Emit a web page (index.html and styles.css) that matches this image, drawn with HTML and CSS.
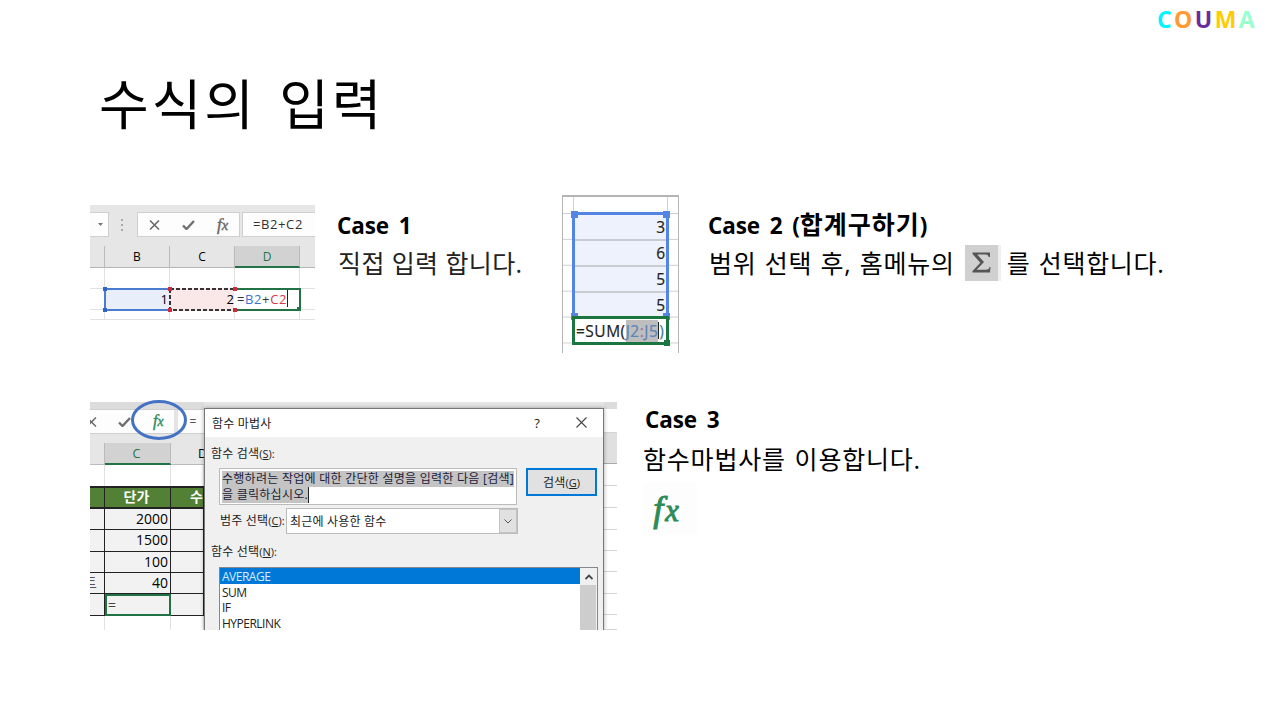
FILE: index.html
```html
<!DOCTYPE html>
<html lang="ko">
<head>
<meta charset="utf-8">
<title>수식의 입력</title>
<link rel="stylesheet" href="styles.css">
</head>
<body>
<main class="slide">
  <header class="brand"><span class="c1">C</span><span class="c2">O</span><span class="c3">U</span><span class="c4">M</span><span class="c5">A</span></header>
  <h1 class="title">수식의 입력</h1>

  <div class="row row-top">
    <section class="sheet-a">
      <div class="bar-a">
        <div class="namebox"><svg width="5" height="3"><path d="M0 0h5L2.500 3z" fill="#777"/></svg></div>
        <svg class="dots" width="3" height="12"><path d="M0 0h2v2H0zM0 5h2v2H0zM0 10h2v2H0z" fill="#aaa"/></svg>
        <div class="tools">
          <svg width="11" height="10" viewBox="0 0 11 10"><path d="M1 .5l9 9M10 .5l-9 9" stroke="#666" stroke-width="1.500"/></svg>
          <svg width="13" height="10" viewBox="0 0 13 10"><path d="M1 5.500L4.500 9 12 1" fill="none" stroke="#707070" stroke-width="2.400"/></svg>
          <span class="fx b">f<i>x</i></span>
        </div>
        <div class="formula">=B2+C2</div>
      </div>
      <div class="grid-a">
        <div class="h"></div><div class="h">B</div><div class="h">C</div><div class="h on">D</div><div class="h last"></div>
        <div></div><div></div><div></div><div></div><div></div>
        <div></div>
        <div class="ref blue">1<b class="k tl"></b><b class="k bl"></b></div>
        <div class="ref pink">2<svg class="ants" width="67" height="23"><rect x="1" y="1" width="65" height="21"/></svg><b class="k tl red"></b><b class="k bl red"></b></div>
        <div class="ref edit">=<span class="t-blue">B2</span>+<span class="t-red">C2</span><span class="caret"></span><b class="k tl red"></b><b class="k bl red"></b><b class="k br green"></b></div>
        <div></div>
        <div></div><div></div><div></div><div></div><div></div>
      </div>
    </section>

    <div class="caption cap-1">
      <h2>Case 1</h2>
      <p class="dim">직접 입력 합니다.</p>
    </div>

    <section class="sheet-b">
      <div class="lead"></div>
      <div class="range">
        <div>3</div><div>6</div><div>5</div><div>5</div>
        <b class="hd tl"></b><b class="hd tr"></b><b class="hd bl"></b><b class="hd br"></b>
      </div>
      <div class="sum">=SUM(<span class="arg">J2<em>:</em>J5</span><span class="caret"></span><span class="t-teal">)</span><b class="hd gr"></b></div>
    </section>

    <div class="caption cap-2">
      <h2>Case 2 (<span class="ko">합계구하기</span>)</h2>
      <p><span class="seg-1">범위 선택 후, 홈메뉴의</span><span class="sigma"><svg width="19" height="21" viewBox="0 0 19 21"><path d="M.5.500H18V5h-1.200Q16.300 2.500 14 2.500H5.200L12 10 4.600 17.800H14Q17 17.800 17.600 15H18.500L18 20.500H.5V19L8.300 10.700.5 2z" fill="#555"/></svg></span><span class="seg-2">를 선택합니다.</span></p>
    </div>
  </div>

  <div class="row row-bottom">
    <section class="shot">
      <div class="back">
        <div class="bar-c">
          <svg width="8" height="10" viewBox="0 0 8 10"><path d="M-3 .5l9 9M6 .5l-9 9" stroke="#666" stroke-width="1.400"/></svg>
          <svg class="chk" width="13" height="10" viewBox="0 0 13 10"><path d="M1 5.500L4.500 9 12 1" fill="none" stroke="#707070" stroke-width="2.400"/></svg>
          <span class="fx g">f<i>x</i></span>
          <span class="split"></span>
          <span class="eq">=</span>
        </div>
        <div class="grid-c">
          <div class="h"></div><div class="h on">C</div><div class="h d">D</div>
          <div class="e"></div><div class="e"></div><div class="e"></div>
          <div class="th"></div><div class="th">단가</div><div class="th q">수</div>
          <div></div><div>2000</div><div></div>
          <div></div><div>1500</div><div></div>
          <div></div><div>100</div><div></div>
          <div class="cut"><span>트</span></div><div>40</div><div></div>
          <div></div><div class="act">=</div><div></div>
          <div class="e"></div><div class="e"></div><div class="e"></div>
        </div>
      </div>
      <div class="dialog">
        <div class="dtitle"><span>함수 마법사</span><span class="help">?</span><svg width="11" height="11" viewBox="0 0 11 11"><path d="M.5.500l10 10M10.500.500l-10 10" stroke="#444" stroke-width="1.100"/></svg></div>
        <div class="dbody">
          <div class="lab l1">함수 검색<small>(<u>S</u>):</small></div>
          <div class="search">
            <div class="area"><span class="s1">수행하려는 작업에 대한 간단한 설명을 입력한 다음 [검색]</span><br><span class="s2">을 클릭하십시오.</span></div>
            <div class="btn">검색<small>(<u>G</u>)</small></div>
          </div>
          <div class="pick"><span class="lab l2">범주 선택<small>(<u>C</u>):</small></span><div class="select"><span>최근에 사용한 함수</span><div class="arrow"><svg width="8" height="5"><path d="M.5.500L4 4 7.500.500" fill="none" stroke="#555"/></svg></div></div></div>
          <div class="lab l3">함수 선택<small>(<u>N</u>):</small></div>
          <div class="list">
            <div class="items"><div class="sel">AVERAGE</div><div>SUM</div><div>IF</div><div>HYPERLINK</div></div>
            <div class="scroll"><div class="up"><svg width="8" height="6"><path d="M.5 5L4 1.500 7.500 5" fill="none" stroke="#444" stroke-width="1.800"/></svg></div><div class="thumb"></div></div>
          </div>
        </div>
      </div>
      <div class="strip"><i class="s-top"></i><i class="s-head"></i><i></i><i></i><i></i><i></i><i></i><i></i><i></i><i></i></div>
      <svg class="ring" width="58" height="42"><ellipse cx="29" cy="21" rx="26.500" ry="18.500" fill="none" stroke="#4472c4" stroke-width="3"/></svg>
    </section>

    <div class="caption cap-3">
      <h2>Case 3</h2>
      <p>함수마법사를 이용합니다.</p>
      <div class="fxbox"><span class="fx g">f<i>x</i></span></div>
    </div>
  </div>
</main>
</body>
</html>
```
FILE: styles.css
```css
* { box-sizing: border-box; }
body { margin: 0; background: #fff; }
.slide {
  width: 1280px; height: 720px; overflow: hidden; background: #fff; color: #000;
  font-family: "Open Sans", "Noto Sans CJK KR", sans-serif;
  display: flex; flex-direction: column;
}
svg { display: block; flex: none; }
.brand { height: 40px; padding-right: 23px; display: flex; justify-content: flex-end; font: 700 23px/39px "Open Sans", sans-serif; letter-spacing: 2.4px; }
.c1 { color: #00f6ff; } .c2 { color: #ff9933; } .c3 { color: #6a2c9c; } .c4 { color: #ffcc00; } .c5 { color: #99ffcc; }
.title { margin: 22px 0 0 99px; height: 80px; font: 400 54px/80px "Noto Sans CJK KR", sans-serif; letter-spacing: 3px; word-spacing: 4px; white-space: nowrap; }
.row { display: flex; align-items: flex-start; }
.row-top { height: 207px; margin: 53px 0 0 90px; }
.row-bottom { padding-left: 90px; }

.caption { white-space: nowrap; }
.caption h2 { margin: 0; height: 35px; font-size: 22.500px; line-height: 33px; font-weight: 700; letter-spacing: -.1px; word-spacing: 4px; }
.caption h2 .ko { font-size: 25px; line-height: 30px; letter-spacing: 1px; }
.caption p { margin: 0; font-size: 25px; line-height: 40px; letter-spacing: .7px; display: flex; align-items: center; height: 40px; }
.cap-1 { margin: 14px 0 0 22px; width: 225px; }
.cap-1 p { padding-left: 1px; letter-spacing: .4px; margin-top: -1px; }
.cap-2 { margin: 14px 0 0 29px; }
.cap-2 h2 { line-height: 31px; }
.cap-2 p { padding-left: 1px; letter-spacing: .7px; word-spacing: 1.200px; margin-top: -1px; }
.cap-3 { margin: 1px 0 0 28px; }
.cap-3 p { margin-left: -2px; letter-spacing: .8px; word-spacing: 1.500px; margin-top: 1px; }
.dim { color: #222; }

.fx { font: italic 17px/20px "Liberation Serif", serif; color: #666; -webkit-text-stroke: .4px currentColor; }
.fx i { font-size: .85em; margin-left: 0; }
.fx.g { color: #2e8b57; }

/* formula bar and first sheet */
.sheet-a { margin-top: 10px; width: 225px; height: 115px; background: #e6e6e6; font-size: 12px; overflow: hidden; }
.bar-a { height: 41px; padding-top: 7px; display: flex; align-items: flex-start; }
.namebox { width: 19px; height: 25px; background: #fdfdfd; border: 1px solid #cfcfcf; border-left: 0; display: flex; align-items: center; padding-left: 8px; }
.dots { margin: 7px 0 0 12px; }
.tools { margin-left: 13px; width: 103px; height: 25px; background: #fdfdfd; border: 1px solid #cfcfcf; display: flex; align-items: center; padding-left: 11px; gap: 22px; }
.formula { margin-left: 2px; flex: 1; height: 25px; background: #fdfdfd; border: 1px solid #cfcfcf; border-right: 0; padding-left: 10px; line-height: 23px; color: #333; font-size: 13px; letter-spacing: .6px; }
.grid-a { display: grid; grid-template-columns: 15px 65px 65px 65px 15px; grid-template-rows: 22px 21px 21px 10px; }
.grid-a > div { background: #fff; border-right: 1px solid #e1e1e1; border-bottom: 1px solid #e1e1e1; min-width: 0; }
.grid-a > .h { background: #e6e6e6; border-right-color: #bbb; border-bottom-color: #b4b4b4; text-align: center; line-height: 21px; font-size: 12px; font-weight: 500; }
.grid-a > .h.on { background: #d2d2d2; color: #217346; border-bottom: 2px solid #217346; }
.grid-a > div:nth-child(5n) { border-right: 0; }
.grid-a > .ref { position: relative; line-height: 21px; text-align: right; padding-right: 1px; font-size: 13px; overflow: visible; margin: -1px 0 0 -1px; height: 23px; width: 67px; }
.grid-a > .blue { background: #e8eefa; border: 2px solid #4a7bd0; line-height: 19px; }
.grid-a > .pink { background: #fae8e8; border: 0; line-height: 23px; padding-right: 2px; }
.grid-a > .edit { border: 2px solid #217346; border-left: 0; text-align: left; padding-left: 3px; line-height: 19px; white-space: nowrap; color: #333; display: flex; letter-spacing: .6px; }
.ants { position: absolute; left: 0; top: 0; }
.ants rect { fill: none; stroke: #343434; stroke-width: 2; stroke-dasharray: 4 2; }
.k { position: absolute; width: 4px; height: 4px; background: #3066c8; }
.k.red { background: #d02c3c; } .k.green { background: #217346; }
.tl { left: -1px; top: -1px; } .bl { left: -1px; bottom: -1px; } .br { right: -1px; bottom: -1px; }
.blue .tl, .blue .bl { left: -3px; } .blue .tl { top: -3px; } .blue .bl { bottom: -3px; }
.edit .tl { top: -3px; } .edit .bl { bottom: -3px; } .edit .br { right: -2px; bottom: -2px; }
.t-blue { color: #3a74d0; } .t-red { color: #d23b44; }
.caret { display: inline-block; width: 1px; height: 17px; background: #222; }

/* SUM sheet */
.sheet-b { width: 117px; height: 158px; border: 1px solid #b4b4b4; border-width: 2px 1px 0 1px; font-size: 16px; padding: 0 10px; background: linear-gradient(#d0d0d0 0 1px, transparent 1px) 0 16px / 100% 25.900px repeat, #fff; }
.lead { height: 15px; border: 1px solid #d0d0d0; border-width: 0 1px; background: #fff; }
.range { position: relative; height: 105px; background: #eef2fd; border: 3px solid #5585e4; border-bottom: 0; display: grid; grid-template-rows: repeat(4, 26px); margin: 0 -1px; }
.range > div { border-bottom: 2px solid #c9cbd2; text-align: right; line-height: 25px; padding-right: 1px; color: #222; font-size: 15.500px; -webkit-text-stroke: .2px currentColor; }
.range > div:nth-child(4) { border: 0; }
.hd { position: absolute; width: 7px; height: 7px; background: #5585e4; }
.hd.tl { left: -4px; top: -4px; } .hd.tr { right: -4px; top: -4px; } .hd.bl { left: -4px; bottom: -3px; } .hd.br { right: -4px; bottom: -3px; }
.sum { position: relative; height: 29px; margin: -1px -1px 0; border: 3px solid #1b7541; background: #fff; display: flex; align-items: center; padding-left: 1px; font-size: 15.500px; letter-spacing: .5px; white-space: nowrap; color: #222; -webkit-text-stroke: .2px currentColor; }
.arg { background: #bebebe; color: #5b84b8; height: 22px; line-height: 22px; } .arg em { font-style: normal; color: #a06bb0; } .t-teal { color: #3a7fa0; }
.sum .gr { right: -4px; bottom: -4px; width: 6px; height: 6px; background: #1b7541; }

.sigma { width: 36px; height: 36px; background: #d0d0d0; border-right: 3px solid #efefef; margin: -1px 6px 0 10px; display: flex; align-items: center; justify-content: center; }

/* function wizard */
.shot { position: relative; width: 527px; height: 228px; display: flex; font-size: 12px; background: #e6e6e6; }
.back { width: 114px; height: 228px; overflow: hidden; flex: none; border-top: 7px solid #dcdcdc; }
.bar-c { height: 25px; background: #fdfdfd; display: flex; align-items: center; border-bottom: 1px solid #d0d0d0; border-top: 1px solid #d0d0d0; }
.chk { margin-left: 20px; }
.bar-c .fx { margin-left: 22px; font-size: 16px; }
.split { width: 4px; height: 24px; background: #e4e4e4; margin: 0 12px 0 10px; }
.grid-c { margin-top: 9px; display: grid; grid-template-columns: 15px 66px 33px; grid-template-rows: 22px 21px 23px 21px 22px 21px 21px 22px 16px; }
.grid-c > div { background: #f2f2f2; border-right: 1px solid #222; border-bottom: 1px solid #222; font-size: 14px; line-height: 20px; text-align: right; padding-right: 2px; min-width: 0; overflow: hidden; }
.grid-c > .h { background: #e6e6e6; border-color: #bbb; text-align: center; font-size: 12.500px; line-height: 21px; }
.grid-c > .on { background: #d2d2d2; color: #217346; border-bottom: 2px solid #217346; }
.grid-c > .d { text-align: left; padding: 0 0 0 27px; border-right: 0; }
.grid-c > .e { background: #fff; border-color: #e1e1e1; border-bottom: 0; }
.grid-c > .th { background: #528135; color: #fff; font-weight: 700; text-align: center; border-top: 2px solid #222; border-bottom: 2px solid #222; line-height: 18px; }
.grid-c > .q { text-align: left; padding-left: 19px; }
.grid-c > .cut { display: flex; justify-content: flex-end; color: #555; padding-right: 7px; }
.grid-c > .act { border: 2px solid #217346; text-align: left; padding-left: 1px; line-height: 18px; color: #444; }
.eq { color: #555; }
.dialog { width: 400px; height: 222px; margin-top: 6px; background: #f0f0f0; border: 1px solid #777; border-bottom: 0; display: flex; flex-direction: column; color: #222; white-space: nowrap; box-shadow: 0 0 4px rgba(0,0,0,.35); clip-path: inset(-5px -5px 0 -5px); flex: none; letter-spacing: .2px; }
.dialog small { font-size: 11px; letter-spacing: 0; }
.dtitle { flex: none; height: 28px; background: #fff; display: flex; align-items: center; padding: 0 16px 1px 7px; }
.help { margin-left: auto; margin-right: 36px; font-size: 13px; }
.dbody { padding: 8px 6px 0; }
.lab { font-size: 12px; line-height: 18px; } .l1 { height: 23px; line-height: 18px; }
.search { display: flex; padding-left: 8px; gap: 9px; align-items: flex-start; }
.area { width: 299px; height: 37px; background: #fff; border: 1px solid #bbb; padding: 2px 0 0 2px; font-size: 12px; line-height: 16px; color: #1c1c38; letter-spacing: .26px; }
.area span { background: #c4c4c4; display: inline-block; height: 16px; } .s2 { border-right: 1px solid #222; }
.btn { width: 71px; height: 28px; border: 2px solid #0078d7; background: #e1e1e1; text-align: center; line-height: 26px; }
.pick { display: flex; align-items: center; padding-left: 8px; margin-top: 3px; height: 26px; }
.l2 { width: 67px; padding-left: 1px; }
.select { width: 232px; height: 26px; border: 1px solid #bbb; background: #fff; display: flex; align-items: center; padding-left: 3px; }
.arrow { margin-left: auto; width: 18px; height: 24px; background: #e1e1e1; border: 1px solid #c4c4c4; display: flex; align-items: center; justify-content: center; }
.l3 { margin-top: 9px; height: 24px; }
.list { margin-left: 8px; width: 379px; height: 64px; border: 1px solid #828790; border-bottom: 0; background: #fff; display: flex; overflow: hidden; }
.items { flex: 1; } .items div { height: 15.700px; line-height: 18px; padding-left: 2px; font-size: 12px; letter-spacing: -.5px; } .items .sel { background: #0078d7; color: #d9ecff; }
.scroll { width: 17px; background: #f0f0f0; } .up { height: 17px; display: flex; align-items: center; justify-content: center; } .thumb { height: 50px; background: #cdcdcd; margin-right: 1px; }
.strip { width: 13px; display: grid; grid-template-rows: 31px 31px 22px 22px 22px 21px 21px 22px 21px 15px; background: #fff; }
.strip i { border-bottom: 1px solid #d5d5d5; } .strip .s-top { border-top: 7px solid #dcdcdc; } .strip .s-head { background: #e0e0e0; border-color: #aaa; }
.ring { position: absolute; left: 40px; top: -3px; }
.fxbox { width: 54px; height: 52px; margin: 4px 0 0 -2px; background: #fdfdfd; display: flex; align-items: center; justify-content: center; padding: 2px 8px 0 0; }
.fxbox .fx { font-size: 36px; line-height: 44px; -webkit-text-stroke-width: 1px; }
.fxbox .fx i { margin-left: 2px; }
```
